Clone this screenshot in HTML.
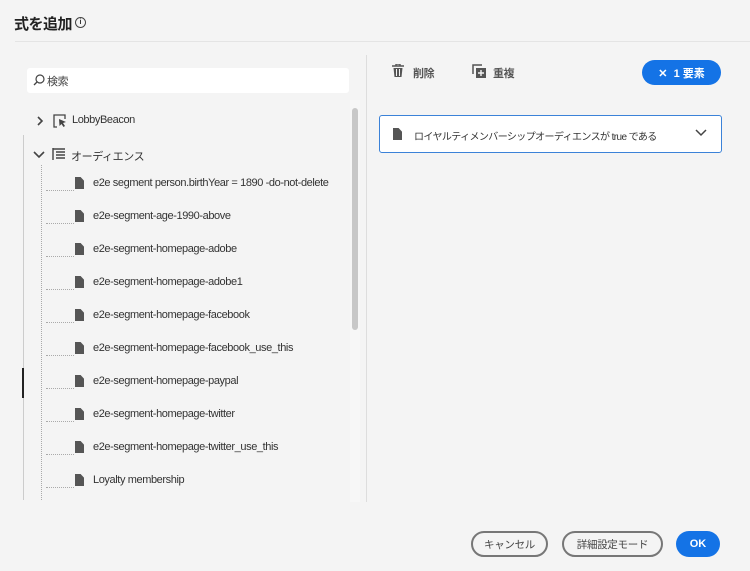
<!DOCTYPE html>
<html><head><meta charset="utf-8"><style>
*{margin:0;padding:0;box-sizing:border-box}
body{width:750px;height:571px;background:#f4f4f4;font-family:"Liberation Sans","Noto Sans CJK JP",sans-serif;color:#2c2c2c;position:relative;overflow:hidden}
.a{position:absolute}
.t{font-size:11px;color:#333;white-space:nowrap;letter-spacing:-0.4px}
.doc{width:9px;height:12px;background:#555;clip-path:polygon(0 0,62% 0,100% 30%,100% 100%,0 100%)}
.btn{position:absolute;height:26px;border:2px solid #777;border-radius:13px;font-size:10.5px;color:#444;display:flex;align-items:center;justify-content:center;letter-spacing:-0.3px}
.d{position:absolute;left:46px;width:28px;border-top:1px dotted #aaa}
</style></head><body>
<div class="a" style="left:14px;top:13px;font-size:15px;font-weight:bold;color:#222;letter-spacing:-0.5px">式を追加</div>
<div class="a" style="left:75px;top:17px;width:11px;height:11px;border:1.3px solid #444;border-radius:50%;font-size:7px;line-height:9px;text-align:center;font-weight:bold">i</div>
<div class="a" style="left:15px;top:41px;width:735px;height:1px;background:#e4e4e4"></div>
<div class="a" style="left:27px;top:68px;width:322px;height:25px;background:#fff;border-radius:3px"></div>
<svg class="a" style="left:33px;top:74px" width="12" height="12"><circle cx="7" cy="5" r="4" fill="none" stroke="#444" stroke-width="1.2"/><line x1="4" y1="8" x2="1" y2="11" stroke="#444" stroke-width="1.3"/></svg>
<div class="a t" style="left:47px;top:73px;color:#444">検索</div>
<div class="a" style="left:350px;top:100px;width:10px;height:402px;background:#f7f7f7"></div>
<div class="a" style="left:352px;top:108px;width:6px;height:222px;background:#c8c8c8;border-radius:3px"></div>
<div class="a" style="left:366px;top:55px;width:1px;height:447px;background:#ddd"></div>
<div class="a" style="left:23px;top:135px;width:1px;height:365px;background:#ccc"></div>
<div class="a" style="left:22px;top:368px;width:2px;height:30px;background:#222"></div>
<div class="a" style="left:41px;top:165px;width:0;height:335px;border-left:1px dotted #aaa"></div>
<svg class="a" style="left:35px;top:115px" width="10" height="12"><path d="M3 2l4 4-4 4" fill="none" stroke="#444" stroke-width="1.6"/></svg>
<svg class="a" style="left:52px;top:113px" width="16" height="16"><path d="M5 14H2V2h11v4" fill="none" stroke="#444" stroke-width="1.3"/><path d="M7 6l7 3-3 1 2 3-1.5 1-2-3-2 2z" fill="#444"/></svg>
<div class="a t" style="left:72px;top:114px">LobbyBeacon</div>
<svg class="a" style="left:33px;top:149px" width="12" height="10"><path d="M1 3l5 5 5-5" fill="none" stroke="#444" stroke-width="1.6"/></svg>
<svg class="a" style="left:52px;top:147px" width="14" height="14"><path d="M1 1v12M1 2h12M4 5h9M4 8h9M4 11h9" stroke="#444" stroke-width="1.4" fill="none"/></svg>
<div class="a t" style="left:71px;top:148px">オーディエンス</div>
<div class="d" style="top:190px"></div><div class="a doc" style="left:75px;top:177px"></div><div class="a t" style="left:93px;top:177px">e2e segment person.birthYear = 1890 -do-not-delete</div>
<div class="d" style="top:223px"></div><div class="a doc" style="left:75px;top:210px"></div><div class="a t" style="left:93px;top:210px">e2e-segment-age-1990-above</div>
<div class="d" style="top:256px"></div><div class="a doc" style="left:75px;top:243px"></div><div class="a t" style="left:93px;top:243px">e2e-segment-homepage-adobe</div>
<div class="d" style="top:289px"></div><div class="a doc" style="left:75px;top:276px"></div><div class="a t" style="left:93px;top:276px">e2e-segment-homepage-adobe1</div>
<div class="d" style="top:322px"></div><div class="a doc" style="left:75px;top:309px"></div><div class="a t" style="left:93px;top:309px">e2e-segment-homepage-facebook</div>
<div class="d" style="top:355px"></div><div class="a doc" style="left:75px;top:342px"></div><div class="a t" style="left:93px;top:342px">e2e-segment-homepage-facebook_use_this</div>
<div class="d" style="top:388px"></div><div class="a doc" style="left:75px;top:375px"></div><div class="a t" style="left:93px;top:375px">e2e-segment-homepage-paypal</div>
<div class="d" style="top:421px"></div><div class="a doc" style="left:75px;top:408px"></div><div class="a t" style="left:93px;top:408px">e2e-segment-homepage-twitter</div>
<div class="d" style="top:454px"></div><div class="a doc" style="left:75px;top:441px"></div><div class="a t" style="left:93px;top:441px">e2e-segment-homepage-twitter_use_this</div>
<div class="d" style="top:487px"></div><div class="a doc" style="left:75px;top:474px"></div><div class="a t" style="left:93px;top:474px">Loyalty membership</div>
<svg class="a" style="left:392px;top:64px" width="12" height="13"><path d="M0 2h12M4 2V0h4v2" stroke="#555" stroke-width="1.4" fill="none"/><path d="M1.5 4h9l-1 9h-7z" fill="#555"/><path d="M4.5 5v7M7.5 5v7" stroke="#f4f4f4" stroke-width="1"/></svg>
<div class="a t" style="left:413px;top:65px;font-weight:bold;color:#555">削除</div>
<svg class="a" style="left:472px;top:64px" width="14" height="14"><path d="M1 10V1h9" fill="none" stroke="#555" stroke-width="1.5"/><rect x="4" y="4" width="10" height="10" fill="#555"/><path d="M9 6v6M6 9h6" stroke="#f4f4f4" stroke-width="1.4"/></svg>
<div class="a t" style="left:493px;top:65px;font-weight:bold;color:#555">重複</div>
<div class="a" style="left:642px;top:60px;width:79px;height:25px;border-radius:13px;background:#1473e6;color:#fff;font-size:11px;font-weight:bold;display:flex;align-items:center;justify-content:center">✕&nbsp; 1 要素</div>
<div class="a" style="left:379px;top:115px;width:343px;height:38px;background:#fff;border:1px solid #3b82d8;border-radius:3px"></div>
<div class="a doc" style="left:393px;top:128px"></div>
<div class="a" style="left:414px;top:128px;font-size:10px;letter-spacing:-0.6px;color:#333;white-space:nowrap">ロイヤルティメンバーシップオーディエンスが true である</div>
<svg class="a" style="left:695px;top:129px" width="12" height="8"><path d="M1 1l5 5 5-5" fill="none" stroke="#444" stroke-width="1.5"/></svg>
<div class="btn" style="left:471px;top:531px;width:77px">キャンセル</div>
<div class="btn" style="left:562px;top:531px;width:101px">詳細設定モード</div>
<div class="a" style="left:676px;top:531px;width:44px;height:26px;border-radius:13px;background:#1473e6;color:#fff;font-size:11px;font-weight:bold;display:flex;align-items:center;justify-content:center">OK</div>
</body></html>
